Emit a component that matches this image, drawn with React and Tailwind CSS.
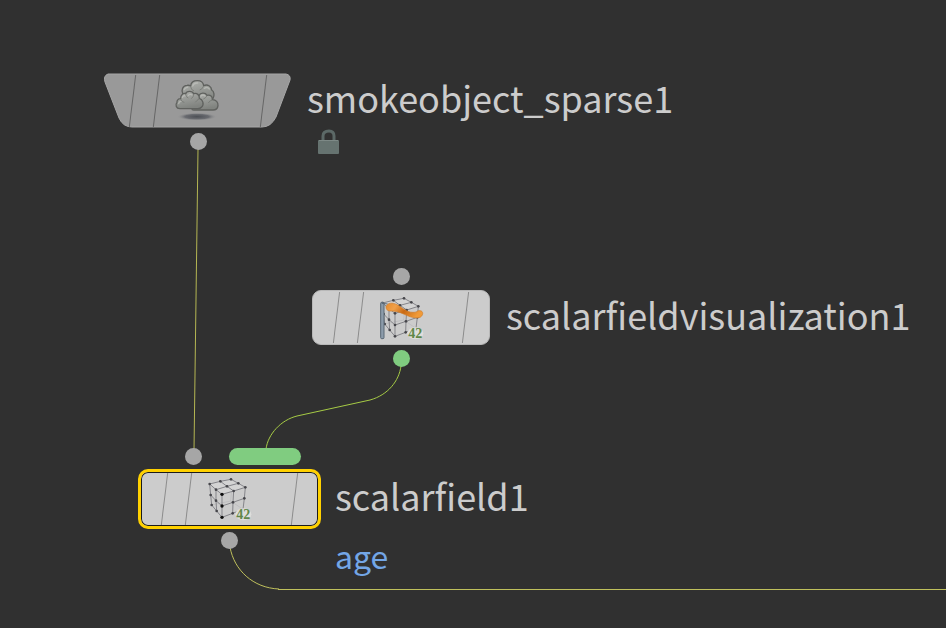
import React from "react";

const font = "font-['Noto_Sans_CJK_SC','Noto_Sans',sans-serif]";

const topFace = "M14 27L46 19L78 13L100 25L121 37L86 48L51 58L33 44Z";
const gridLines =
    "M46 19L66 34L86 48M33 44L66 34L100 25M14 27L17 60L20 90L35 108L51 127L83 115L114 103L118 70L121 37M33 44L33 77L35 108M51 58L51 127M86 48L84 82L83 115M17 60L33 77L51 93L84 82L118 70";
const gridPoints = [
    [14, 27], [46, 19], [78, 13], [100, 25], [121, 37], [33, 44], [66, 34], [86, 48],
    [17, 60], [20, 90], [33, 77], [35, 108], [84, 82], [83, 115], [118, 70],
];
const frontPoints = [[51, 58], [51, 93], [51, 127]];

const Cube = ({ strong }) => (
    <g>
        <path d="M78 13L80 46L77 78L114 103M77 78L20 90" fill="none" stroke="#b8b8bb" strokeWidth="2" />
        <path d={topFace} fill="#d4d4d4" stroke="#85858a" strokeWidth="3" />
        <path d={gridLines} fill="none" stroke="#85858a" strokeWidth="3" />
        {gridPoints.map(([x, y]) => (
            <circle key={`${x}-${y}`} cx={x} cy={y} r="4" fill="#45454a" />
        ))}
        {frontPoints.map(([x, y]) => (
            <circle key={y} cx={x} cy={y} r={strong ? 5 : 4} fill={strong ? "#0c0c0c" : "#45454a"} />
        ))}
    </g>
);

const FortyTwo = () => (
    <g>
        <ellipse cx="115" cy="118" rx="24" ry="18" fill="#dededc" />
        <text x="94" y="133" fontSize="42" fontWeight="700" fill="#5f8749" fontFamily="Liberation Serif, serif">
            42
        </text>
    </g>
);

const FieldIcon = () => (
    <svg viewBox="0 0 144 144" className="size-12 shrink-0" aria-hidden="true">
        <Cube strong />
        <FortyTwo />
    </svg>
);

const VisualizationIcon = () => (
    <svg viewBox="0 0 144 144" className="size-12 shrink-0" aria-hidden="true">
        <defs>
            <linearGradient id="ribbon" x1="0" y1="0" x2="1" y2="0.3">
                <stop offset="0" stopColor="#e58a2c" />
                <stop offset="0.3" stopColor="#f0a04a" />
                <stop offset="0.6" stopColor="#c96a14" />
                <stop offset="1" stopColor="#f09a38" />
            </linearGradient>
        </defs>
        <g transform="translate(3 0)">
            <Cube />
        </g>
        <rect x="11" y="25" width="10" height="109" rx="3" fill="#8c9cab" stroke="#5a6875" strokeWidth="3" />
        <path d="M14 28L32 30" stroke="#5a6875" strokeWidth="3" />
        <path
            d="M27 38C31 26 46 24 62 33C78 42 88 55 108 55C122 55 119 49 129 50C140 51 139 63 131 69C119 76 96 68 82 61C66 53 50 50 38 51C30 50 27 45 27 38Z"
            fill="url(#ribbon)"
            stroke="#cf7c28"
            strokeWidth="2"
        />
        <FortyTwo />
    </svg>
);

const SmokeIcon = () => (
    <svg viewBox="0 0 144 144" className="size-12 shrink-0" aria-hidden="true">
        <defs>
            <linearGradient id="puff" x1="0" y1="0" x2="0.3" y2="1">
                <stop offset="0" stopColor="#b0b2ae" />
                <stop offset="1" stopColor="#80837f" />
            </linearGradient>
            <radialGradient id="shadow">
                <stop offset="0" stopColor="#4c4f55" />
                <stop offset="0.6" stopColor="#696b70" />
                <stop offset="1" stopColor="#999999" stopOpacity="0" />
            </radialGradient>
        </defs>
        <ellipse cx="72" cy="119" rx="60" ry="12" fill="url(#shadow)" />
        <g fill="url(#puff)" stroke="#5f615e" strokeWidth="4" strokeLinejoin="round">
            <path d="M30 52C23 40 29 26 42 25C47 24 50 25 53 27C54 15 63 11 73 11C84 11 91 18 92 26C104 20 115 28 116 39C124 44 125 56 120 64L108 82L42 78Z" />
            <path d="M78 55C82 47 97 46 102 55C112 52 119 59 118 68C129 68 136 76 135 86C134 96 128 99 120 99L62 99C55 99 55 92 61 88Z" />
            <path d="M22 95C9 96 6 83 12 76C11 70 17 64 23 65C22 54 31 47 38 50C41 41 58 41 62 50C72 47 80 54 79 64C90 67 94 83 86 90C83 94 79 95 74 95Z" />
        </g>
        <g fill="none" stroke="#c6c8c3" strokeWidth="4" strokeLinecap="round" opacity="0.6">
            <path d="M34 38Q36 31 44 31M59 27Q62 17 74 18M94 34Q103 28 109 36" />
            <path d="M17 80Q18 72 26 73M28 62Q31 54 38 57M46 56Q50 49 57 54M84 57Q90 52 96 57" />
        </g>
        <g fill="none" stroke="#747772" strokeWidth="3" opacity="0.8">
            <path d="M53 29Q54 39 63 42M92 27Q87 38 80 39M38 51Q38 61 46 63M62 51Q62 60 55 65M23 66Q25 76 34 76M79 65Q71 70 67 76M102 56Q98 64 91 66M118 69Q109 71 106 78" />
        </g>
    </svg>
);

const Port = ({ label, className }) => (
    <button type="button" aria-label={label} className={`h-[17px] rounded-full ${className}`}></button>
);

// the slanted lines mark off the flag areas at both ends of a node
const NodeBody = ({ name, icon, line, className, children }) => (
    <button type="button" aria-label={name} className={`relative flex items-center ${className}`}>
        {children}
        <span className={`relative h-full w-6 border-r -skew-x-7 ${line}`}></span>
        <span className={`relative h-full w-6 border-r -skew-x-7 ${line}`}></span>
        <span className="relative ml-4">{icon}</span>
        <span className={`relative ml-auto h-full w-6 border-l -skew-x-7 ${line}`}></span>
    </button>
);

const Wires = () => (
    <svg className="absolute inset-0 h-full w-full" fill="none" strokeWidth="1" aria-hidden="true">
        <path d="M198 149L194 450" stroke="#b5b653" />
        <path d="M401 366C399 381 388 395 370 400L297 416C281 420 268 434 266 449" stroke="#a6cb45" />
        <path d="M230 547C234 570 253 588 279 589" stroke="#bfc05c" />
        <line x1="278" y1="589.5" x2="100%" y2="589.5" stroke="#bfc05c" />
    </svg>
);

const App = () => {
    return (
        <main className={`relative min-h-screen w-full overflow-hidden bg-[#303030] text-[#cccccc] ${font}`}>
            <Wires />

            <section className="absolute left-[103px] top-[73px] grid grid-cols-[auto_auto] gap-x-3.5">
                <NodeBody name="smokeobject_sparse1" icon={<SmokeIcon />} line="border-[#666666]" className="h-14 w-[190px] px-1.5 py-0.5">
                    <svg viewBox="0 0 190 56" className="absolute inset-0 h-full w-full" aria-hidden="true">
                        <path
                            d="M5 1L183 1Q188 2 187 7L173 44Q168 54 159 54L29 54Q20 54 16 45L2 9Q0 3 5 1Z"
                            fill="#999999"
                            stroke="#a6a6a6"
                            strokeWidth="1"
                        />
                    </svg>
                </NodeBody>
                <h2 className="text-[36px] leading-[48px]">smokeobject_sparse1</h2>
                <div className="flex justify-center pt-1">
                    <Port label="Output" className="w-[17px] bg-[#a6a6a6]" />
                </div>
                <svg viewBox="0 0 22 26" className="ml-[11px] h-[26px] w-[22px]" role="img" aria-label="Locked">
                    <path d="M5 12V7Q5 2 11 2Q16 2 16 7V12" fill="none" stroke="#5c6967" strokeWidth="3" />
                    <rect x="0" y="11" width="21" height="14" rx="1" fill="#667370" />
                    <path d="M1 11.5H20" stroke="#7d8986" />
                </svg>
            </section>

            <section className="absolute left-[312px] top-[268px] grid grid-cols-[auto_auto] gap-x-4">
                <div className="flex h-[22px] justify-center">
                    <Port label="Input" className="w-[17px] bg-[#a6a6a6]" />
                </div>
                <NodeBody
                    name="scalarfieldvisualization1"
                    icon={<VisualizationIcon />}
                    line="border-[#8c8c8c]"
                    className="col-start-1 h-[55px] w-[178px] rounded-[9px] border border-[#b8b8b8] bg-[#cccccc] py-px"
                />
                <h2 className="text-[36px] leading-[48px]">scalarfieldvisualization1</h2>
                <div className="flex justify-center pt-[5px]">
                    <Port label="Output" className="w-[17px] bg-[#80cc80]" />
                </div>
            </section>

            <section className="absolute left-[138px] top-[448px] grid grid-cols-[auto_auto] gap-x-3.5">
                <div className="flex h-[21px] gap-[27px] pl-[47px]">
                    <Port label="Input 1" className="w-[17px] bg-[#a6a6a6]" />
                    <Port label="Input 2" className="w-[72px] bg-[#80cc80]" />
                </div>
                <NodeBody
                    name="scalarfield1"
                    icon={<FieldIcon />}
                    line="border-[#8c8c8c]"
                    className="col-start-1 h-[60px] w-[183px] rounded-[10px] border-3 border-[#ffd100] bg-[#cccccc] py-px inset-ring inset-ring-[#1c1c1c]"
                />
                <h2 className="text-[36px] leading-[52px]">scalarfield1</h2>
                <div className="flex items-start justify-center pt-[3px]">
                    <Port label="Output" className="w-[17px] bg-[#a6a6a6]" />
                </div>
                <p className="text-[32px] leading-[52px] text-[#73a6e6]">age</p>
            </section>
        </main>
    );
};

export default App;
